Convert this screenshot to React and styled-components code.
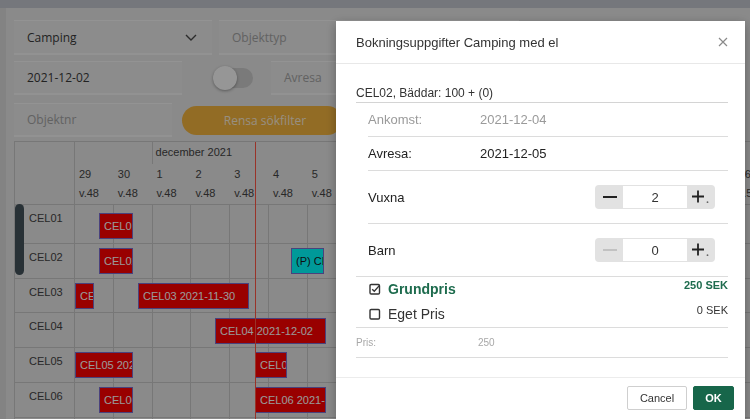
import React from 'react'
import styled, { createGlobalStyle } from 'styled-components'

const GlobalStyle = createGlobalStyle`
  html, body { margin: 0; padding: 0; }
  body {
    width: 750px;
    height: 419px;
    overflow: hidden;
    background: #e6e6e6;
    font-family: "Liberation Sans", Arial, sans-serif;
  }
  * { box-sizing: border-box; }
`

const COL = 38.8

const days = [
  ['29', 'v.48'], ['30', 'v.48'], ['1', 'v.48'], ['2', 'v.48'], ['3', 'v.48'],
  ['4', 'v.48'], ['5', 'v.48'], ['6', 'v.49'], ['7', 'v.49'], ['8', 'v.49'],
  ['9', 'v.49'], ['10', 'v.49'], ['11', 'v.49'], ['12', 'v.49'], ['13', 'v.50'],
  ['14', 'v.50'], ['15', 'v.50'], ['16', 'v.50'],
]

const units = [
  { name: 'CEL01', h: 39, top: 8, events: [{ l: 24, w: 34, t: 'CEL01 2021-11-30' }] },
  { name: 'CEL02', h: 35, top: 4, events: [
    { l: 24, w: 34, t: 'CEL02 2021-11-30' },
    { l: 216, w: 33, t: '(P) CEL02 2021-12-04', pre: true },
  ] },
  { name: 'CEL03', h: 34, top: 4, events: [
    { l: 0, w: 19, t: 'CEL03 2021-11-28' },
    { l: 63, w: 111, t: 'CEL03 2021-11-30' },
  ] },
  { name: 'CEL04', h: 35, top: 5, events: [{ l: 140, w: 111, t: 'CEL04 2021-12-02' }] },
  { name: 'CEL05', h: 35, top: 4, events: [
    { l: 0, w: 58, t: 'CEL05 2021-11-29' },
    { l: 180, w: 32, t: 'CEL05 2021-12-04' },
  ] },
  { name: 'CEL06', h: 35, top: 4, events: [
    { l: 24, w: 34, t: 'CEL06 2021-11-30' },
    { l: 180, w: 71, t: 'CEL06 2021-12-04' },
  ] },
  { name: 'CEL07', h: 35, top: 4, events: [] },
]

/* ---------- background page ---------- */

const Page = styled.div`
  display: flex;
  flex-direction: column;
  height: 419px;
`

const TopBar = styled.div`
  height: 8px;
  flex: none;
  background: #c3c7cf;
`

const Main = styled.div`
  flex: 1;
  display: flex;
  min-height: 0;
`

const SideStrip = styled.div`
  width: 6px;
  flex: none;
  background: #dadada;
`

const Content = styled.div`
  flex: 1;
  padding: 12px 0 0 8px;
  display: flex;
  flex-direction: column;
  min-width: 0;
`

const Filters = styled.div`
  display: flex;
  flex-direction: column;
`

const FilterRow = styled.div`
  display: flex;
  align-items: center;
  height: ${p => p.h}px;
  margin-bottom: ${p => p.mb || 0}px;
`

const Field = styled.div`
  width: ${p => p.w}px;
  height: 100%;
  flex: none;
  margin-left: ${p => p.ml || 0}px;
  display: flex;
  align-items: center;
  justify-content: space-between;
  padding: 0 15px 0 13px;
  background: #e9e9e9;
  border-top: 1px solid #f6f6f6;
  border-bottom: 2px solid #f4f4f4;
  font-family: "Open Sans", "Liberation Sans", sans-serif;
  font-size: 12px;
  color: ${p => (p.placeholder ? '#a4a4a4' : '#3a3a3a')};
`

const Toggle = styled.div`
  position: relative;
  width: 40px;
  height: 20px;
  flex: none;
  margin: 0 18px 0 31px;
  border-radius: 10px;
  background: #cbcbcb;

  &::after {
    content: '';
    position: absolute;
    left: 0;
    top: -2px;
    width: 24px;
    height: 24px;
    border-radius: 50%;
    background: #fbfbfb;
    box-shadow: 0 1px 3px rgba(0, 0, 0, 0.35);
  }
`

const ClearButton = styled.button`
  width: 160px;
  height: 29px;
  flex: none;
  margin-left: 10px;
  border: none;
  border-radius: 15px;
  background: #f3b43f;
  color: rgba(255, 255, 255, 0.8);
  font-family: "Open Sans", "Liberation Sans", sans-serif;
  font-size: 12px;
  padding: 0 0 0 6px;
`

/* ---------- scheduler ---------- */

const Scheduler = styled.div`
  position: relative;
  margin-top: 4px;
  border-top: 1px solid #c6c6c6;
  border-left: 1px solid #c6c6c6;
  font-size: 11px;
  color: #444;
  flex: 1;
  overflow: hidden;
`

const Row = styled.div`
  display: flex;
  height: ${p => p.h}px;
  border-bottom: ${p => (p.noBorder ? 'none' : '1px solid #c6c6c6')};
`

const ResourceCell = styled.div`
  width: 60px;
  flex: none;
  border-right: 1px solid #c6c6c6;
  padding: 6px 0 0 14px;
  line-height: 14px;
`

const Track = styled.div`
  position: relative;
  flex: 1;
  display: flex;
`

const MonthCell = styled.div`
  width: ${p => (p.span ? `${p.span * COL}px` : 'auto')};
  flex: ${p => (p.span ? 'none' : 1)};
  border-right: ${p => (p.span ? '1px solid #c6c6c6' : 'none')};
  padding-left: 3px;
  line-height: 21px;
  white-space: nowrap;
`

const DayHead = styled.div`
  width: ${COL}px;
  flex: none;
  padding: 1px 0 0 4px;
  line-height: 19px;
`

const DayCell = styled.div`
  width: ${COL}px;
  flex: none;
  border-right: 1px solid #c6c6c6;
`

const Booking = styled.div`
  position: absolute;
  height: 26px;
  background: ${p => (p.pre ? '#00ffff' : '#ff0000')};
  border: 1px solid #7c6fd0;
  color: ${p => (p.pre ? '#1a1a1a' : '#ffffff')};
  font-size: 11px;
  line-height: 24px;
  padding-left: 4px;
  white-space: nowrap;
  overflow: hidden;
`

const NowLine = styled.div`
  position: absolute;
  top: 0;
  bottom: 0;
  left: 240px;
  width: 1px;
  background: #ff5545;
`

const ScrollThumb = styled.div`
  position: absolute;
  left: 0;
  top: 62px;
  width: 9px;
  height: 71px;
  border-radius: 5px;
  background: #43525b;
`

/* ---------- dialog ---------- */

const Backdrop = styled.div`
  position: fixed;
  inset: 0;
  background: rgba(0, 0, 0, 0.4);
`

const Dialog = styled.div`
  position: absolute;
  top: 21px;
  left: 336px;
  width: 409px;
  background: #fff;
  box-shadow: 0 3px 10px rgba(0, 0, 0, 0.3);
  color: #333;
`

const DialogHeader = styled.div`
  height: 43px;
  display: flex;
  align-items: center;
  justify-content: space-between;
  padding: 0 17px 0 20px;
  border-bottom: 1px solid #e8e8e8;
  font-size: 13px;
  color: #333;
`

const DialogBody = styled.div`
  padding: 22px 17px 19px 20px;
`

const UnitTitle = styled.div`
  font-size: 12px;
  line-height: 14px;
  padding-bottom: 2px;
  border-bottom: 1px solid #d4d4d4;
`

const InfoList = styled.div`
  margin-left: 12px;
`

const InfoRow = styled.div`
  display: flex;
  align-items: center;
  height: ${p => p.h}px;
  border-bottom: ${p => (p.last ? 'none' : '1px solid #dcdcdc')};
  font-size: 13px;
  color: ${p => (p.muted ? '#9a9a9a' : '#222')};
`

const InfoLabel = styled.div`
  width: 112px;
  flex: none;
`

const Stepper = styled.div`
  margin-left: auto;
  margin-right: 13px;
  display: flex;
  width: 120px;
  height: 24px;
  padding: 1px;
  border-radius: 4px;
  background: #e2e2e2;
`

const StepButton = styled.div`
  position: relative;
  width: 27px;
  flex: none;
  display: flex;
  align-items: center;
  justify-content: center;
`

const StepValue = styled.div`
  flex: 1;
  background: #fff;
  display: flex;
  align-items: center;
  justify-content: center;
  font-size: 13px;
  color: #333;
`

const PriceSection = styled.div`
  border-top: 1px solid #dcdcdc;
`

const PriceRow = styled.div`
  display: flex;
  height: ${p => p.h}px;
  align-items: center;
  padding-left: 13px;
  border-bottom: ${p => (p.border ? '1px solid #dcdcdc' : 'none')};
`

const PriceName = styled.div`
  margin-left: 7px;
  font-size: 14px;
  font-weight: ${p => (p.active ? 700 : 400)};
  color: ${p => (p.active ? '#1d6b4d' : '#333')};
`

const Amount = styled.div`
  margin-left: auto;
  align-self: flex-start;
  padding-top: ${p => p.pt}px;
  font-size: 11px;
  line-height: 13px;
  font-weight: ${p => (p.active ? 700 : 400)};
  color: ${p => (p.active ? '#1d6b4d' : '#333')};
`

const TotalRow = styled.div`
  display: flex;
  align-items: center;
  height: 30px;
  border-bottom: 1px solid #dcdcdc;
  font-size: 10px;
  color: #a8a8a8;
`

const TotalLabel = styled.div`
  width: 122px;
`

const DialogFooter = styled.div`
  display: flex;
  justify-content: flex-end;
  gap: 6px;
  padding: 8px 11px 10px 20px;
  border-top: 1px solid #ececec;
`

const FooterButton = styled.button`
  height: 24px;
  width: ${p => p.w}px;
  padding: 0;
  border-radius: 2px;
  font-family: "Liberation Sans", Arial, sans-serif;
  font-size: 11px;
  font-weight: ${p => (p.primary ? 700 : 400)};
  border: 1px solid ${p => (p.primary ? '#17664a' : '#cfcfcf')};
  background: ${p => (p.primary ? '#17664a' : '#fff')};
  color: ${p => (p.primary ? '#fff' : '#333')};
`

/* ---------- icons ---------- */

const Chevron = () => (
  <svg width="12" height="7" viewBox="0 0 12 7">
    <polyline points="1,1 6,6 11,1" fill="none" stroke="#4a4a4a" strokeWidth="1.4" />
  </svg>
)

const CloseIcon = () => (
  <svg width="10" height="10" viewBox="0 0 10 10">
    <path d="M1 1 L9 9 M9 1 L1 9" stroke="#8a8a8a" strokeWidth="1.2" />
  </svg>
)

const MinusIcon = ({ disabled }) => (
  <svg width="14" height="4" viewBox="0 0 14 4">
    <rect x="0" y="1" width="14" height="2" fill={disabled ? '#c2c2c2' : '#222'} />
  </svg>
)

const PlusIcon = () => (
  <svg width="18" height="16" viewBox="0 0 18 16">
    <path d="M6 1.5 V13.5 M0 7.5 H12" stroke="#222" strokeWidth="1.8" />
    <circle cx="15.5" cy="13.2" r="0.9" fill="#666" />
  </svg>
)

const CheckIcon = ({ checked }) => (
  <svg width="12" height="12" viewBox="0 0 12 12">
    <rect x="1" y="1.5" width="9.5" height="9.5" rx="1.2" fill="none" stroke="#333" strokeWidth="1.4" />
    {checked && <path d="M3.2 6.2 L5.3 8.2 L10.5 2.4" fill="none" stroke="#333" strokeWidth="1.4" />}
  </svg>
)

function Counter({ value, min }) {
  return (
    <Stepper>
      <StepButton><MinusIcon disabled={min} /></StepButton>
      <StepValue>{value}</StepValue>
      <StepButton><PlusIcon /></StepButton>
    </Stepper>
  )
}

function Timeline() {
  return (
    <Scheduler>
      <Row h={22} noBorder>
        <ResourceCell />
        <Track>
          <MonthCell span={2} />
          <MonthCell>december 2021</MonthCell>
        </Track>
      </Row>
      <Row h={41}>
        <ResourceCell />
        <Track>
          {days.map(([d, w]) => (
            <DayHead key={d}>{d}<br />{w}</DayHead>
          ))}
        </Track>
      </Row>
      {units.map(u => (
        <Row key={u.name} h={u.h}>
          <ResourceCell>{u.name}</ResourceCell>
          <Track>
            {days.map(([d]) => <DayCell key={d} />)}
            {u.events.map(e => (
              <Booking key={e.t} pre={e.pre} style={{ left: e.l, width: e.w, top: u.top }}>
                {e.t}
              </Booking>
            ))}
          </Track>
        </Row>
      ))}
      <NowLine />
      <ScrollThumb />
    </Scheduler>
  )
}

function BookingDialog() {
  return (
    <Backdrop>
      <Dialog>
        <DialogHeader>
          <span>Bokningsuppgifter Camping med el</span>
          <CloseIcon />
        </DialogHeader>
        <DialogBody>
          <UnitTitle>CEL02, Bäddar: 100 + (0)</UnitTitle>
          <InfoList>
            <InfoRow h={34} muted>
              <InfoLabel>Ankomst:</InfoLabel>
              <span>2021-12-04</span>
            </InfoRow>
            <InfoRow h={34}>
              <InfoLabel>Avresa:</InfoLabel>
              <span>2021-12-05</span>
            </InfoRow>
            <InfoRow h={53}>
              <InfoLabel>Vuxna</InfoLabel>
              <Counter value={2} />
            </InfoRow>
            <InfoRow h={52} last>
              <InfoLabel>Barn</InfoLabel>
              <Counter value={0} min />
            </InfoRow>
          </InfoList>
          <PriceSection>
            <PriceRow h={24}>
              <CheckIcon checked />
              <PriceName active>Grundpris</PriceName>
              <Amount active pt={2}>250 SEK</Amount>
            </PriceRow>
            <PriceRow h={27} border>
              <CheckIcon />
              <PriceName>Eget Pris</PriceName>
              <Amount pt={3}>0 SEK</Amount>
            </PriceRow>
            <TotalRow>
              <TotalLabel>Pris:</TotalLabel>
              <span>250</span>
            </TotalRow>
          </PriceSection>
        </DialogBody>
        <DialogFooter>
          <FooterButton w={60}>Cancel</FooterButton>
          <FooterButton w={41} primary>OK</FooterButton>
        </DialogFooter>
      </Dialog>
    </Backdrop>
  )
}

export default function App() {
  return (
    <>
      <GlobalStyle />
      <Page>
        <TopBar />
        <Main>
          <SideStrip />
          <Content>
            <Filters>
              <FilterRow h={35} mb={6}>
                <Field w={198}>
                  <span>Camping</span>
                  <Chevron />
                </Field>
                <Field w={300} ml={7} placeholder>Objekttyp</Field>
              </FilterRow>
              <FilterRow h={34} mb={8}>
                <Field w={168}>2021-12-02</Field>
                <Toggle />
                <Field w={300} placeholder>Avresa</Field>
              </FilterRow>
              <FilterRow h={34}>
                <Field w={158} placeholder>Objektnr</Field>
                <ClearButton>Rensa sökfilter</ClearButton>
              </FilterRow>
            </Filters>
            <Timeline />
          </Content>
        </Main>
      </Page>
      <BookingDialog />
    </>
  )
}
